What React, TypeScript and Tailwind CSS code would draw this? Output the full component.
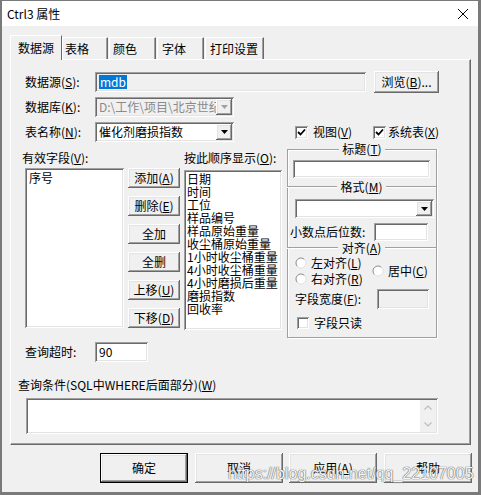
import React from "react";

const SUNKEN =
  "shadow-[inset_1px_1px_0_#a0a0a0,inset_-1px_-1px_0_#ffffff,inset_2px_2px_0_#696969,inset_-2px_-2px_0_#e3e3e3]";
const RAISED =
  "shadow-[inset_-1px_-1px_0_#696969,inset_1px_1px_0_#ffffff,inset_-2px_-2px_0_#a0a0a0,inset_2px_2px_0_#e3e3e3]";

function K({ k }: { k: string }) {
  return (
    <>
      (<span className="underline underline-offset-[1px]">{k}</span>)
    </>
  );
}

function Btn({ className, children }: { className: string; children: React.ReactNode }) {
  return (
    <div className={`${RAISED} flex shrink-0 items-center justify-center bg-[#f0f0f0] leading-[14px] ${className}`}>
      {children}
    </div>
  );
}

function Arrow({ disabled }: { disabled?: boolean }) {
  return (
    <div className={`${RAISED} flex h-full w-[16px] items-center justify-center bg-[#f0f0f0]`}>
      <svg width="7" height="4" viewBox="0 0 7 4">
        <polygon points="0,0 7,0 3.5,4" fill={disabled ? "#a0a0a0" : "#000"} />
      </svg>
    </div>
  );
}

function Check({ checked, size }: { checked?: boolean; size: string }) {
  return (
    <div className={`${SUNKEN} flex shrink-0 items-center justify-center bg-white ${size}`}>
      {checked && (
        <svg width="9" height="8" viewBox="0 0 9 8">
          <path d="M1 4 L3.5 6.5 L8 1.5" fill="none" stroke="#000" strokeWidth="1.8" />
        </svg>
      )}
    </div>
  );
}

function Radio() {
  return (
    <svg width="12" height="12" viewBox="0 0 12 12" className="shrink-0">
      <circle cx="6" cy="6" r="5" fill="#fff" />
      <path d="M2.46 9.54 A5 5 0 0 1 9.54 2.46" fill="none" stroke="#8a8a8a" strokeWidth="1" />
      <path d="M9.54 2.46 A5 5 0 0 1 2.46 9.54" fill="none" stroke="#e3e3e3" strokeWidth="1" />
    </svg>
  );
}

function Separator({ label }: { label: React.ReactNode }) {
  return (
    <div className="-ml-px flex h-[14px] items-center">
      <div className="h-[2px] flex-1 border-t border-b border-t-[#a0a0a0] border-b-white" />
      <span className="px-[4px] leading-[14px]">{label}</span>
      <div className="h-[2px] flex-1 border-t border-b border-t-[#a0a0a0] border-b-white" />
    </div>
  );
}

const orderFields = [
  "日期",
  "时间",
  "工位",
  "样品编号",
  "样品原始重量",
  "收尘桶原始重量",
  "1小时收尘桶重量",
  "4小时收尘桶重量",
  "4小时磨损后重量",
  "磨损指数",
  "回收率",
];

export default function App() {
  return (
    <div className="relative flex h-[495px] w-[481px] flex-col overflow-hidden border-t border-r-[3px] border-b-[3px] border-l-2 border-[#7a7a7a] bg-[#f0f0f0] font-['Noto_Sans_CJK_SC',sans-serif] text-[12px] text-black">
      {/* title bar */}
      <div className="flex h-[25px] shrink-0 items-center justify-between bg-white pr-[10px] pl-[5px]">
        <span className="leading-[14px]">Ctrl3 属性</span>
        <svg width="10" height="10" viewBox="0 0 10 10">
          <path d="M0 0 L10 10 M10 0 L0 10" stroke="#000" strokeWidth="1" />
        </svg>
      </div>

      {/* tabs */}
      <div className="mt-[9px] ml-[8px] flex h-[24px] items-end">
        <div className="relative z-10 -mb-px flex h-[25px] w-[52px] justify-center border-t border-r border-l border-t-white border-r-[#696969] border-l-white bg-[#f0f0f0] pt-[5px] leading-[14px]">
          数据源
        </div>
        <div className="h-[22px] w-[46px] border-t border-r border-l border-t-white border-r-[#696969] border-l-white pt-[4px] pl-[2px] leading-[14px] shadow-[inset_-1px_0_0_#a0a0a0]">
          表格
        </div>
        <div className="ml-px h-[22px] w-[47px] border-t border-r border-l border-t-white border-r-[#696969] border-l-white pt-[4px] pl-[3px] leading-[14px] shadow-[inset_-1px_0_0_#a0a0a0]">
          颜色
        </div>
        <div className="ml-px h-[22px] w-[47px] border-t border-r border-l border-t-white border-r-[#696969] border-l-white pt-[4px] pl-[4px] leading-[14px] shadow-[inset_-1px_0_0_#a0a0a0]">
          字体
        </div>
        <div className="ml-px h-[22px] w-[59px] border-t border-r border-l border-t-white border-r-[#696969] border-l-white pt-[4px] pl-[4px] leading-[14px] shadow-[inset_-1px_0_0_#a0a0a0]">
          打印设置
        </div>
      </div>

      {/* panel */}
      <div className="ml-[8px] flex h-[386px] w-[461px] flex-col border border-t-white border-r-[#696969] border-b-[#696969] border-l-white pl-[11px] shadow-[inset_-1px_-1px_0_#a0a0a0]">
        {/* 数据源 */}
        <div className="mt-[11px] flex h-[22px] items-center">
          <span className="ml-[3px] w-[70px] leading-[14px]">
            数据源<K k="S" />:
          </span>
          <div className={`${SUNKEN} flex h-[20px] w-[271px] items-center bg-[#f0f0f0] pl-[4px]`}>
            <span className="bg-[#0078d7] px-px leading-[14px] text-white">mdb</span>
          </div>
          <Btn className="ml-[8px] h-[22px] w-[65px]">
            <span>
              浏览<K k="B" />...
            </span>
          </Btn>
        </div>

        {/* 数据库 */}
        <div className="mt-[4px] flex h-[20px] items-center">
          <span className="ml-[3px] w-[70px] leading-[14px]">
            数据库<K k="K" />:
          </span>
          <div className={`${SUNKEN} flex h-[20px] w-[139px] items-center bg-[#f0f0f0] p-[2px]`}>
            <span className="flex-1 overflow-hidden pl-[2px] leading-[14px] whitespace-nowrap text-[#8a8a8a]">
              {"D:\\工作\\项目\\北京世纪城"}
            </span>
            <Arrow disabled />
          </div>
        </div>

        {/* 表名称 + checkboxes */}
        <div className="mt-[5px] flex h-[20px] items-center">
          <span className="ml-[3px] w-[70px] leading-[14px]">
            表名称<K k="N" />:
          </span>
          <div className={`${SUNKEN} flex h-[20px] w-[139px] items-center bg-white p-[2px]`}>
            <span className="flex-1 pl-[2px] leading-[14px] whitespace-nowrap">催化剂磨损指数</span>
            <Arrow />
          </div>
          <div className="ml-[61px] flex w-[78px] items-center">
            <Check checked size="h-[13px] w-[13px]" />
            <span className="ml-[5px] leading-[14px]">
              视图<K k="V" />
            </span>
          </div>
          <div className="flex items-center">
            <Check checked size="h-[13px] w-[13px]" />
            <span className="ml-[2px] leading-[14px]">
              系统表<K k="X" />
            </span>
          </div>
        </div>

        {/* lists + group */}
        <div className="flex items-start">
          <div className="flex w-[260px] flex-col pt-[9px]">
            <div className="flex h-[14px] leading-[14px]">
              <span className="w-[162px]">
                有效字段<K k="V" />:
              </span>
              <span>
                按此顺序显示<K k="O" />:
              </span>
            </div>
            <div className="mt-[3px] flex items-start">
              <div className={`${SUNKEN} ml-[3px] h-[160px] w-[99px] bg-white pt-[3px] pl-[4px] leading-[13px]`}>
                序号
              </div>
              <div className="ml-[4px] flex w-[52px] flex-col gap-[8px]">
                <Btn className="h-[20px] w-[52px]">
                  <span>
                    添加<K k="A" />
                  </span>
                </Btn>
                <Btn className="h-[20px] w-[52px]">
                  <span>
                    删除<K k="E" />
                  </span>
                </Btn>
                <Btn className="h-[20px] w-[52px]">全加</Btn>
                <Btn className="h-[20px] w-[52px]">全删</Btn>
                <Btn className="h-[20px] w-[52px]">
                  <span>
                    上移<K k="U" />
                  </span>
                </Btn>
                <Btn className="h-[20px] w-[52px]">
                  <span>
                    下移<K k="D" />
                  </span>
                </Btn>
              </div>
              <div className={`${SUNKEN} mt-[2px] ml-[4px] flex h-[160px] w-[98px] flex-col bg-white pt-[2px] pl-[3px] leading-[13px]`}>
                {orderFields.map((f) => (
                  <span key={f} className="whitespace-nowrap">
                    {f}
                  </span>
                ))}
              </div>
            </div>
          </div>

          {/* group box */}
          <div className="ml-[5px] flex w-[150px] flex-col">
            <div className="flex h-[14px] items-end">
              <div className="h-[7px] flex-1 border-t border-l border-[#a0a0a0] shadow-[inset_1px_1px_0_#ffffff]" />
              <span className="self-start px-[3px] leading-[14px]">
                标题<K k="T" />
              </span>
              <div className="h-[7px] flex-1 border-t border-r border-[#a0a0a0] shadow-[inset_0_1px_0_#ffffff,1px_0_0_#ffffff]" />
            </div>
            <div className="flex h-[182px] flex-col border-x border-b border-[#a0a0a0] shadow-[inset_1px_0_0_#ffffff,1px_1px_0_#ffffff]">
              <div className={`${SUNKEN} mt-[4px] ml-[5px] h-[18px] w-[137px] bg-white`} />
              <div className="mt-[2px]">
                <Separator
                  label={
                    <>
                      格式<K k="M" />
                    </>
                  }
                />
              </div>
              <div className={`${SUNKEN} mt-[5px] ml-[7px] flex h-[19px] w-[139px] justify-end bg-white p-[2px]`}>
                <Arrow />
              </div>
              <div className="mt-[5px] flex h-[18px] items-center">
                <span className="ml-[2px] w-[84px] leading-[14px]">小数点后位数:</span>
                <div className={`${SUNKEN} h-[18px] w-[54px] bg-white`} />
              </div>
              <Separator
                label={
                  <>
                    对齐<K k="A" />
                  </>
                }
              />
              <div className="flex items-center">
                <div className="ml-[7px] flex w-[77px] flex-col">
                  <div className="flex h-[16px] items-center">
                    <Radio />
                    <span className="ml-[4px] leading-[14px]">
                      左对齐<K k="L" />
                    </span>
                  </div>
                  <div className="flex h-[16px] items-center">
                    <Radio />
                    <span className="ml-[4px] leading-[14px]">
                      右对齐<K k="R" />
                    </span>
                  </div>
                </div>
                <div className="flex items-center">
                  <Radio />
                  <span className="ml-[4px] leading-[14px]">
                    居中<K k="C" />
                  </span>
                </div>
              </div>
              <div className="mt-[2px] flex h-[20px] items-center">
                <span className="ml-[7px] w-[82px] leading-[14px]">
                  字段宽度<K k="F" />:
                </span>
                <div className={`${SUNKEN} h-[20px] w-[52px] bg-[#f0f0f0]`} />
              </div>
              <div className="mt-[7px] flex h-[14px] items-center">
                <div className="ml-[9px]">
                  <Check size="h-[12px] w-[12px]" />
                </div>
                <span className="ml-[5px] leading-[14px]">字段只读</span>
              </div>
            </div>
          </div>
        </div>

        {/* 查询超时 */}
        <div className="mt-[4px] flex h-[20px] items-center">
          <span className="ml-[3px] w-[70px] leading-[14px]">查询超时:</span>
          <div className={`${SUNKEN} flex h-[20px] w-[53px] items-center bg-white pl-[4px] leading-[14px]`}>90</div>
        </div>

        {/* 查询条件 */}
        <span className="mt-[16px] -ml-[4px] h-[14px] leading-[14px]">
          查询条件(SQL中WHERE后面部分)<K k="W" />
        </span>
        <div className={`${SUNKEN} mt-[6px] ml-[4px] flex h-[36px] w-[412px] justify-end bg-white p-[2px]`}>
          <div className="flex h-full w-[16px] flex-col items-center justify-between bg-[#f0f0f0] py-[5px]">
            <svg width="8" height="5" viewBox="0 0 8 5">
              <path d="M0.5 4.5 L4 1 L7.5 4.5" fill="none" stroke="#bcbcbc" strokeWidth="1.2" />
            </svg>
            <svg width="8" height="5" viewBox="0 0 8 5">
              <path d="M0.5 0.5 L4 4 L7.5 0.5" fill="none" stroke="#bcbcbc" strokeWidth="1.2" />
            </svg>
          </div>
        </div>
      </div>

      {/* bottom buttons */}
      <div className="mt-[8px] ml-[98px] flex">
        <Btn className="h-[30px] w-[88px] border border-black">确定</Btn>
        <Btn className="ml-[7px] h-[30px] w-[88px]">取消</Btn>
        <Btn className="ml-[6px] h-[30px] w-[88px]">
          <span>
            应用<K k="A" />
          </span>
        </Btn>
        <Btn className="ml-[7px] h-[30px] w-[88px]">帮助</Btn>
      </div>

      {/* watermark */}
      <span className="pointer-events-none absolute top-[464px] left-[226px] font-['Liberation_Sans',sans-serif] text-[16px] leading-[18px] whitespace-nowrap text-[#f4f4f4] [text-shadow:0_0_1px_#555,0_0_1px_#555]">
        https://blog.csdn.net/qq_22107005
      </span>
    </div>
  );
}
